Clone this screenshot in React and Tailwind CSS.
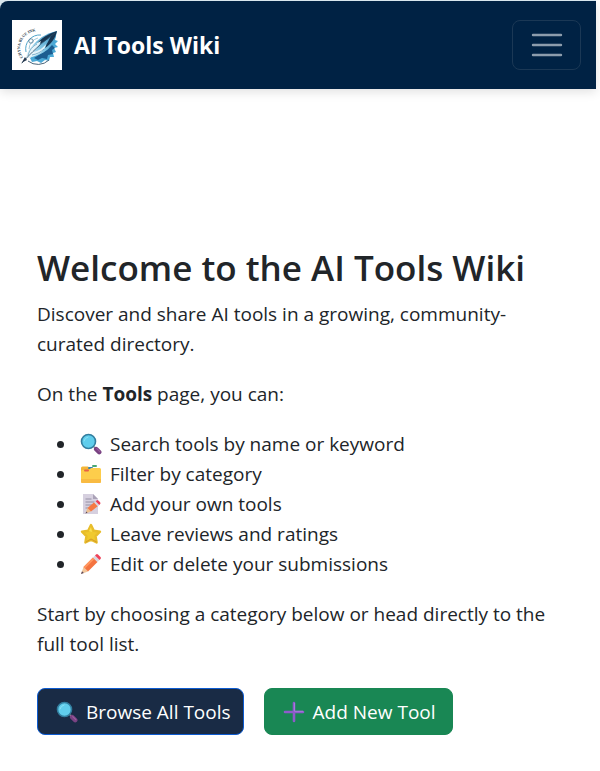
import React from "react";

function Logo() {
  return (
    <svg viewBox="0 0 50 50" className="size-[50px] bg-white" role="img" aria-label="Chyna Blue Ink">
      <defs>
        <path id="logo-arc" d="M11 37.500 A 17 17 0 0 1 33 13" />
        <linearGradient id="feather" x1="0" y1="1" x2="1" y2="0">
          <stop offset="0" stopColor="#cfe8f4" />
          <stop offset=".45" stopColor="#7fc4e2" />
          <stop offset="1" stopColor="#2b86bb" />
        </linearGradient>
      </defs>
      <path d="M39 17l5-1-1 4 3 1-3 3 3 3-4 1 2 4-3 1 1 4-4 0-1 4-4-1-4 3-4-2-5 1-2-4 14-10z" fill="#4ba9d6" />
      <path d="M40 25l3 3-3 2 1 4-5 1-1 4-5-1-4 2-4-2 13-8z" fill="#1c5d90" />
      <path d="M29 15 A 14 14 0 0 0 14 32" fill="none" stroke="#50a5cb" strokeWidth="1" />
      <path d="M26 18 A 12 12 0 0 0 17 29" fill="none" stroke="#87bbd2" strokeWidth=".8" />
      <path d="M16 41 A 16 16 0 0 0 37 40" fill="none" stroke="#49657b" strokeWidth="1" />
      <circle cx="19" cy="21" r="2.200" fill="none" stroke="#527990" strokeWidth=".8" />
      <path d="M14 38C16 29 22 23 30 17c5-3 10-5 15-6-1 7-4 13-9 18-6 5-13 8-22 9z" fill="url(#feather)" />
      <path d="M24 25c5-7 12-11 21-14-2 8-6 13-12 17 2-5 4-8 6-12-5 5-10 8-15 9z" fill="#173652" />
      <path d="M14 38c1-8 7-13 15-17-1 4-4 7-8 11 6-1 10-4 13-8-1 7-8 12-20 14z" fill="#e6f4fa" />
      <path d="M16 36c1-6 5-10 9-12M20 35c5-1 9-3 12-6" fill="none" stroke="#5295b8" strokeWidth=".7" />
      <path d="M10 43C19 33 29 23 43 13" fill="none" stroke="#294b66" strokeWidth=".8" />
      <path d="M9 44l4-7 2 3-4 2z" fill="#26384e" />
      <text fill="#263746" className="font-['Liberation_Serif',serif] text-[4px] font-bold">
        <textPath href="#logo-arc">CHYNA BLUE INK</textPath>
      </text>
    </svg>
  );
}

function Icon({ children }) {
  return (
    <svg viewBox="0 0 22 22" className="size-[22px] shrink-0" aria-hidden="true">
      {children}
    </svg>
  );
}

function SearchIcon() {
  return (
    <Icon>
      <path d="M13.4 14.5l1.3-1.3 2 1.8-1.6 1.6z" fill="#8a8792" />
      <path d="M16.2 16.2l3 3" stroke="#794282" strokeWidth="4.500" strokeLinecap="round" />
      <path d="M16.8 15.6l3 3" stroke="#9b5d9e" strokeWidth="1.2" strokeLinecap="round" />
      <circle cx="8.5" cy="8.5" r="7" fill="#60cdec" stroke="#327e9f" strokeWidth="1.6" />
      <path d="M4 8a5 5 0 0 1 4-4" fill="none" stroke="#8be3f5" strokeWidth="1" strokeLinecap="round" />
    </Icon>
  );
}

function FolderIcon() {
  return (
    <Icon>
      <path d="M1 5Q1 3.500 2.500 3.500H8l2 2h9.500Q21 5.500 21 7V18H1z" fill="#f3b638" />
      <rect x="12" y="2" width="5" height="2" rx="1" fill="#49a873" />
      <rect x="8" y="4" width="5" height="2" rx="1" fill="#3c82ad" />
      <path d="M1 8.500Q1 7 2.500 7H9l2-2h8.500Q21 5 21 6.500v12q0 1.500-1.500 1.500h-17Q1 20 1 18.500z" fill="#fdcd4b" />
      <rect x="4" y="6.500" width="5" height="2" rx="1" fill="#e86245" />
      <path d="M1 16h20v2.5q0 1.500-1.500 1.500h-17Q1 20 1 18.500z" fill="#f9bb42" />
    </Icon>
  );
}

function MemoIcon() {
  return (
    <Icon>
      <path d="M3 1h10l5 5v15H3z" fill="#d6d0df" />
      <path d="M13 1l5 5h-5z" fill="#aaa2b7" />
      <path d="M5.500 6h6M5.500 9h9M5.500 12h7M5.500 15h3" stroke="#9690a5" strokeWidth="1" />
      <path d="M5.500 20.500l2-5.500 3.500 3.500z" fill="#edc090" />
      <path d="M7.500 15l7-6 3.800 3.800-7.300 5.700z" fill="#f57943" />
      <path d="M14 9.500l1.600-1.300 3.800 3.800-1.600 1.400z" fill="#d8d4e1" />
      <path d="M15.600 8.200l1-.8q1-.7 2 .3l1.500 1.500q.9 1 0 1.900l-.8.800z" fill="#ef4057" />
      <path d="M5.500 20.500l.8-2 1.200 1.200z" fill="#54455a" />
    </Icon>
  );
}

function StarIcon() {
  return (
    <Icon>
      <path
        d="M11 2l2.800 5.700 6.200 1-4.400 4.500 1 6.300L11 16.700 5.400 19.500l1-6.300L2 8.700l6.200-1z"
        fill="#f0c92e"
        stroke="#e8bd2b"
        strokeWidth="2.400"
        strokeLinejoin="round"
      />
      <path d="M9 8l2-4 1 5z" fill="#f9df52" />
      <path d="M6 19l5-3 5.500 3" fill="none" stroke="#d69b28" strokeWidth="1" strokeLinecap="round" />
    </Icon>
  );
}

function PencilIcon() {
  return (
    <Icon>
      <path d="M1 21l2.500-7 4.500 4.500z" fill="#f2c69b" />
      <path d="M3.500 14L13 4.500 17.500 9 8 18.500z" fill="#f47440" />
      <path d="M3.500 14L13 4.500l1.500 1.500L5 15.500z" fill="#ff965e" />
      <path d="M13 4.500l2-2L19.500 7l-2 2z" fill="#d8d5df" />
      <path d="M15 2.500l1-1q1-1 2 0l2.500 2.500q1 1 0 2l-1 1z" fill="#ef4258" />
      <path d="M1 21l1-2.800L3.800 20z" fill="#54435a" />
    </Icon>
  );
}

function PlusIcon() {
  return (
    <Icon>
      <path d="M11 2v18M2 11h18" stroke="#8e5acb" strokeWidth="2.600" strokeLinecap="round" />
      <path d="M11.500 2v8.300H20" fill="none" stroke="#a879dc" strokeWidth="1" />
    </Icon>
  );
}

const features = [
  { icon: SearchIcon, text: "Search tools by name or keyword" },
  { icon: FolderIcon, text: "Filter by category" },
  { icon: MemoIcon, text: "Add your own tools" },
  { icon: StarIcon, text: "Leave reviews and ratings" },
  { icon: PencilIcon, text: "Edit or delete your submissions" },
];

export default function App() {
  return (
    <div className="min-h-screen bg-white pr-1 font-['Open_Sans','Noto_Sans',sans-serif] text-[19px] leading-[30px] text-[#212529]">
      <header className="border-t border-[#d9e7ef] bg-[#d9e7ef] shadow-[0_3px_10px_rgba(0,0,0,0.12)]">
        <nav className="flex items-center justify-between rounded-tl-lg bg-[#002244] py-[19px] pr-[15px] pl-3">
          <a href="#home" className="flex items-center gap-3 text-[23px] font-bold text-white">
            <Logo />
            AI Tools Wiki
          </a>
          <button
            type="button"
            aria-label="Toggle navigation"
            className="flex h-[50px] w-[69px] items-center justify-center rounded-lg border border-[#1b3855]"
          >
            <svg viewBox="0 0 38 38" className="size-[38px]" aria-hidden="true">
              <path d="M5 9h28M5 19h28M5 29h28" stroke="#8c9cac" strokeWidth="2.400" strokeLinecap="round" />
            </svg>
          </button>
        </nav>
      </header>

      <main className="px-[37px] pt-[155px] pb-9">
        <h1 className="mb-[7px] text-[35px] leading-[48px] font-semibold">Welcome to the AI Tools Wiki</h1>
        <p className="mb-5">Discover and share AI tools in a growing, community-curated directory.</p>
        <p className="mb-5">
          On the <strong className="font-bold">Tools</strong> page, you can:
        </p>
        <ul className="mb-5 list-disc pl-10">
          {features.map(({ icon: FeatureIcon, text }) => (
            <li key={text}>
              <span className="inline-flex items-center gap-2 pl-[3px] align-top">
                <FeatureIcon />
                {text}
              </span>
            </li>
          ))}
        </ul>
        <p>Start by choosing a category below or head directly to the full tool list.</p>
        <div className="mt-[29px] flex flex-wrap gap-5 text-white">
          <a
            href="#tools"
            className="flex h-[47px] items-center gap-2 rounded-lg border border-[#0d5bd0] bg-[#192b45] pr-3 pl-[18px]"
          >
            <SearchIcon />
            Browse All Tools
          </a>
          <a
            href="#new"
            className="flex h-[47px] items-center gap-2 rounded-lg border border-[#198754] bg-[#198754] pr-4 pl-[18px]"
          >
            <PlusIcon />
            Add New Tool
          </a>
        </div>
      </main>
    </div>
  );
}
